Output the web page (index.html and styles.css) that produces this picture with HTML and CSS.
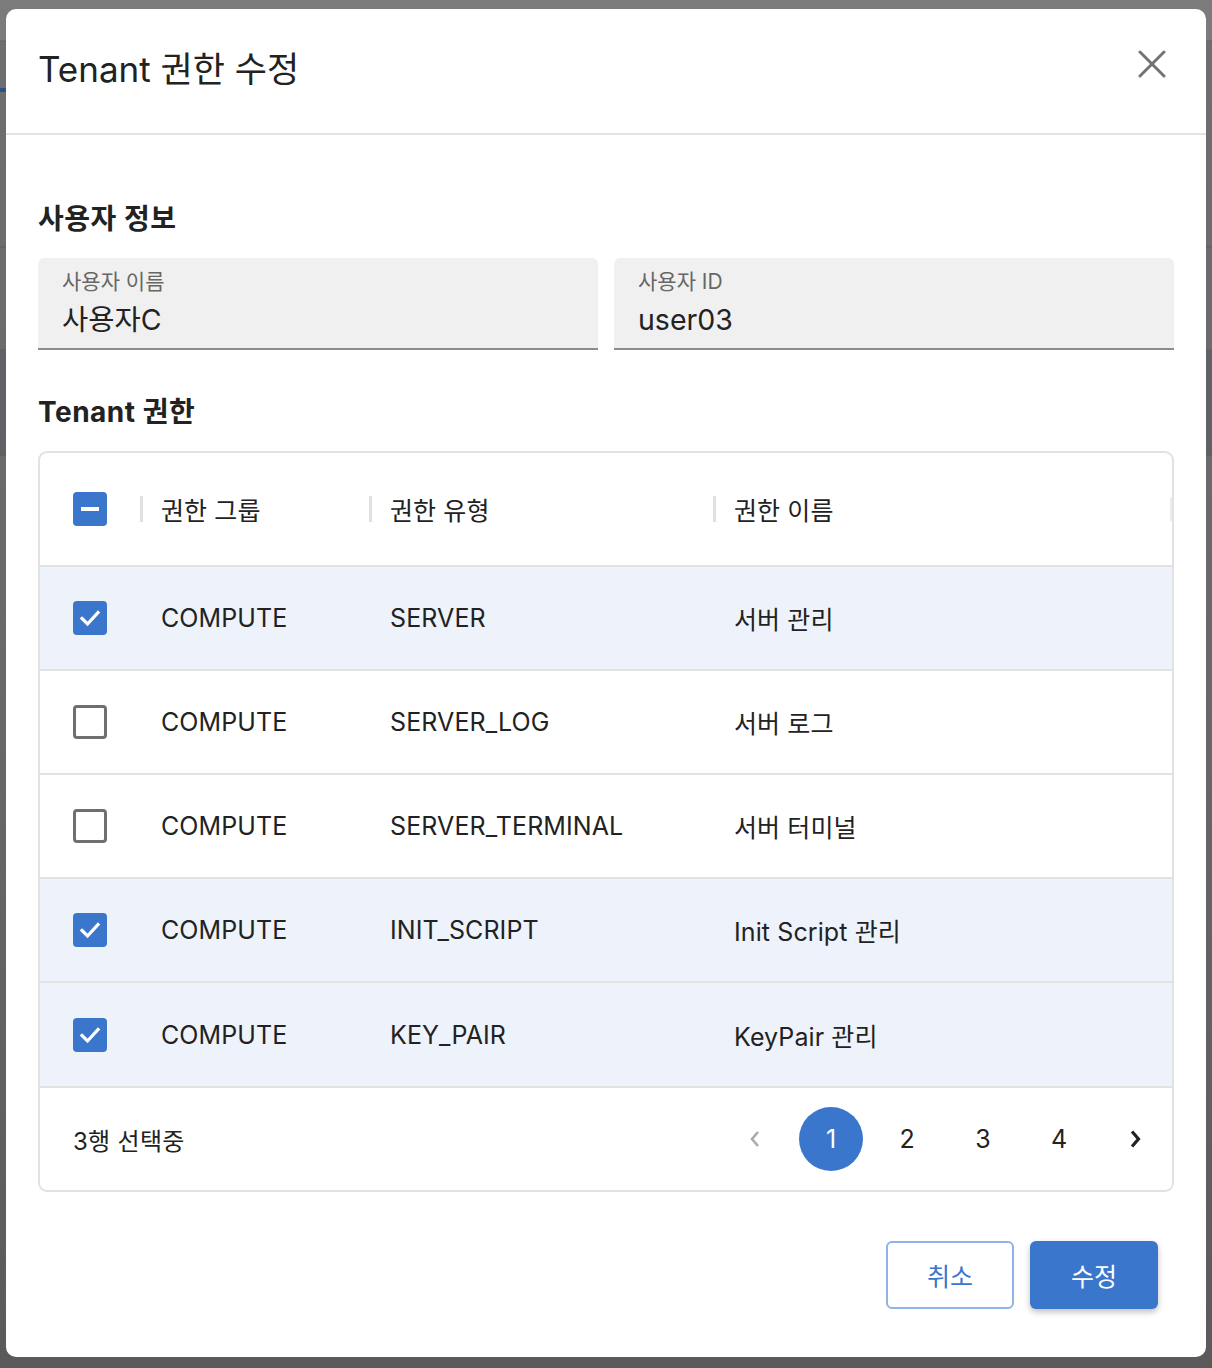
FILE: index.html
```html
<!DOCTYPE html>
<html lang="ko">
<head>
<meta charset="utf-8">
<title>Tenant 권한 수정</title>
<link rel="stylesheet" href="styles.css">
</head>
<body>
<div class="backdrop">
  <div class="dialog">
    <div class="dialog-header">
      <h1 class="dialog-title">Tenant 권한 수정</h1>
      <button class="close-btn" aria-label="닫기">
        <svg width="28" height="28" viewBox="0 0 28 28"><path d="M2 2 L26 26 M26 2 L2 26" stroke="#747474" stroke-width="3" stroke-linecap="round" fill="none"/></svg>
      </button>
    </div>
    <div class="dialog-body">
      <h2 class="section-title first">사용자 정보</h2>
      <div class="fields">
        <div class="field">
          <div class="field-label">사용자 이름</div>
          <div class="field-value">사용자C</div>
        </div>
        <div class="field">
          <div class="field-label">사용자 ID</div>
          <div class="field-value">user03</div>
        </div>
      </div>
      <h2 class="section-title">Tenant 권한</h2>
      <div class="table">
        <div class="row head">
          <div class="cell check"><span class="cb indet"><span class="dash"></span></span></div>
          <div class="cell sep">권한 그룹</div>
          <div class="cell sep">권한 유형</div>
          <div class="cell sep">권한 이름</div>
        </div>
        <div class="row selected">
          <div class="cell check"><span class="cb on"><svg width="24" height="24" viewBox="0 0 24 24"><path d="M4 12.5 L9.5 18 L20 6.5" stroke="#fff" stroke-width="3.2" fill="none" stroke-linecap="square"/></svg></span></div>
          <div class="cell">COMPUTE</div>
          <div class="cell">SERVER</div>
          <div class="cell">서버 관리</div>
        </div>
        <div class="row">
          <div class="cell check"><span class="cb off"></span></div>
          <div class="cell">COMPUTE</div>
          <div class="cell">SERVER_LOG</div>
          <div class="cell">서버 로그</div>
        </div>
        <div class="row">
          <div class="cell check"><span class="cb off"></span></div>
          <div class="cell">COMPUTE</div>
          <div class="cell">SERVER_TERMINAL</div>
          <div class="cell">서버 터미널</div>
        </div>
        <div class="row selected">
          <div class="cell check"><span class="cb on"><svg width="24" height="24" viewBox="0 0 24 24"><path d="M4 12.5 L9.5 18 L20 6.5" stroke="#fff" stroke-width="3.2" fill="none" stroke-linecap="square"/></svg></span></div>
          <div class="cell">COMPUTE</div>
          <div class="cell">INIT_SCRIPT</div>
          <div class="cell">Init Script 관리</div>
        </div>
        <div class="row selected last">
          <div class="cell check"><span class="cb on"><svg width="24" height="24" viewBox="0 0 24 24"><path d="M4 12.5 L9.5 18 L20 6.5" stroke="#fff" stroke-width="3.2" fill="none" stroke-linecap="square"/></svg></span></div>
          <div class="cell">COMPUTE</div>
          <div class="cell">KEY_PAIR</div>
          <div class="cell">KeyPair 관리</div>
        </div>
        <div class="table-footer">
          <div class="selected-count">3행 선택중</div>
          <div class="pager">
            <span class="page-item nav disabled"><svg width="16" height="22" viewBox="0 0 16 22"><path d="M11 4 L5 11 L11 18" stroke="#ababab" stroke-width="2.6" fill="none"/></svg></span>
            <span class="page-item current">1</span>
            <span class="page-item">2</span>
            <span class="page-item">3</span>
            <span class="page-item">4</span>
            <span class="page-item nav"><svg width="16" height="22" viewBox="0 0 16 22"><path d="M5 3.5 L11.5 11 L5 18.5" stroke="#222" stroke-width="3.2" fill="none"/></svg></span>
          </div>
        </div>
      </div>
    </div>
    <div class="dialog-actions">
      <button class="btn outline">취소</button>
      <button class="btn primary">수정</button>
    </div>
  </div>
</div>
</body>
</html>
```
FILE: styles.css
```css
* { box-sizing: border-box; }
html, body { margin: 0; padding: 0; }
body {
  font-family: Inter, "Noto Sans CJK KR", sans-serif;
  color: #222;
}
.backdrop {
  width: 1212px;
  height: 1368px;
  padding: 9px 6px 0 6px;
  background:
    linear-gradient(#2f4f86, #2f4f86) 0 88px / 6px 4px no-repeat,
    linear-gradient(to bottom,
      transparent 0, transparent 40px, rgba(0,0,0,0.08) 40px, rgba(0,0,0,0.08) 42px, transparent 42px,
      transparent 246px, rgba(0,0,0,0.08) 246px, rgba(0,0,0,0.08) 248px, transparent 248px,
      transparent 349px, rgba(20,30,60,0.12) 349px, rgba(20,30,60,0.12) 454px, rgba(0,0,0,0.1) 454px, rgba(0,0,0,0.1) 456px, transparent 456px),
    linear-gradient(to bottom, #7b7b7b 0, #7b7b7b 40px, #6e6e6e 42px, #686868 700px, #5a5a5a 1368px);
}
.dialog {
  width: 1200px;
  height: 1348px;
  background: #fff;
  border-radius: 10px;
  display: flex;
  flex-direction: column;
}
.dialog-header {
  height: 126px;
  flex-shrink: 0;
  border-bottom: 2px solid #e3e3e3;
  display: flex;
  align-items: center;
  justify-content: space-between;
  padding: 0 39px 10px 32px;
}
.dialog-title {
  margin: 0;
  font-size: 35px;
  font-weight: 400;
  color: #222;
}
.close-btn {
  border: 0;
  background: none;
  padding: 0;
  width: 30px;
  height: 30px;
  display: flex;
  align-items: center;
  justify-content: center;
  margin-top: -4px;
}
.dialog-body {
  padding: 0 32px;
}
.section-title {
  margin: 44px 0 21px;
  font-size: 28px;
  letter-spacing: 0.5px;
  line-height: 36px;
  font-weight: 700;
  color: #222;
}
.section-title.first { margin-top: 66px; }
.fields {
  display: grid;
  grid-template-columns: 1fr 1fr;
  gap: 16px;
}
.field {
  height: 92px;
  background: #f0f0f0;
  border-radius: 6px 6px 0 0;
  border-bottom: 2px solid #8c8c8c;
  padding: 10px 24px 0;
}
.field-label {
  font-size: 21px;
  line-height: 28px;
  color: #666;
}
.field-value {
  font-size: 28.5px;
  line-height: 40px;
  color: #222;
  margin-top: 4px;
}
.table {
  border: 2px solid #e2e2e2;
  border-radius: 9px;
  overflow: hidden;
}
.row {
  display: grid;
  grid-template-columns: 100px 229px 344px 1fr;
  height: 104px;
  border-top: 2px solid #e2e2e2;
  align-items: center;
  font-size: 25px;
  letter-spacing: 0.1px;
  color: #222;
}
.row.head {
  height: 112px;
  border-top: 0;
  position: relative;
}
.row.last { height: 105px; }
.row.head::after {
  content: "";
  position: absolute;
  right: 0;
  top: 44px;
  width: 2px;
  height: 24px;
  background: #ececec;
}
.row.selected { background: #eef2fa; }
.cell {
  padding-left: 21px;
  position: relative;
  white-space: nowrap;
}
.cell.check {
  padding-left: 33px;
  display: flex;
  align-items: center;
}
.cell.sep::before {
  content: "";
  position: absolute;
  left: 0;
  top: 50%;
  width: 3px;
  height: 26px;
  margin-top: -13px;
  background: #e0e0e0;
}
.cb {
  width: 34px;
  height: 34px;
  border-radius: 4px;
  display: flex;
  align-items: center;
  justify-content: center;
}
.cb.on, .cb.indet { background: #3a76cc; }
.cb.off { border: 3px solid #6f6f6f; }
.cb .dash {
  width: 18px;
  height: 4px;
  background: #fff;
}
.table-footer {
  height: 104px;
  border-top: 2px solid #e2e2e2;
  display: flex;
  align-items: center;
  justify-content: space-between;
  padding: 0 5px 0 33px;
}
.selected-count {
  font-size: 24px;
  letter-spacing: 0.3px;
  color: #222;
}
.pager {
  display: flex;
  gap: 12px;
  align-items: center;
}
.page-item {
  width: 64px;
  height: 64px;
  border-radius: 50%;
  display: flex;
  align-items: center;
  justify-content: center;
  font-size: 25px;
  color: #222;
}
.page-item.current {
  background: #3a76cc;
  color: #fff;
}
.dialog-actions {
  margin-top: 49px;
  display: flex;
  justify-content: flex-end;
  gap: 16px;
  padding-right: 48px;
}
.btn {
  width: 128px;
  height: 68px;
  border-radius: 6px;
  font-family: Inter, "Noto Sans CJK KR", sans-serif;
  font-size: 25px;
  cursor: pointer;
}
.btn.outline {
  background: #fff;
  border: 2px solid #8fb3e6;
  color: #3a76cc;
}
.btn.primary {
  background: #3a76cc;
  border: 0;
  color: #fff;
  box-shadow: 0 3px 6px rgba(0,0,0,0.25);
}
```
